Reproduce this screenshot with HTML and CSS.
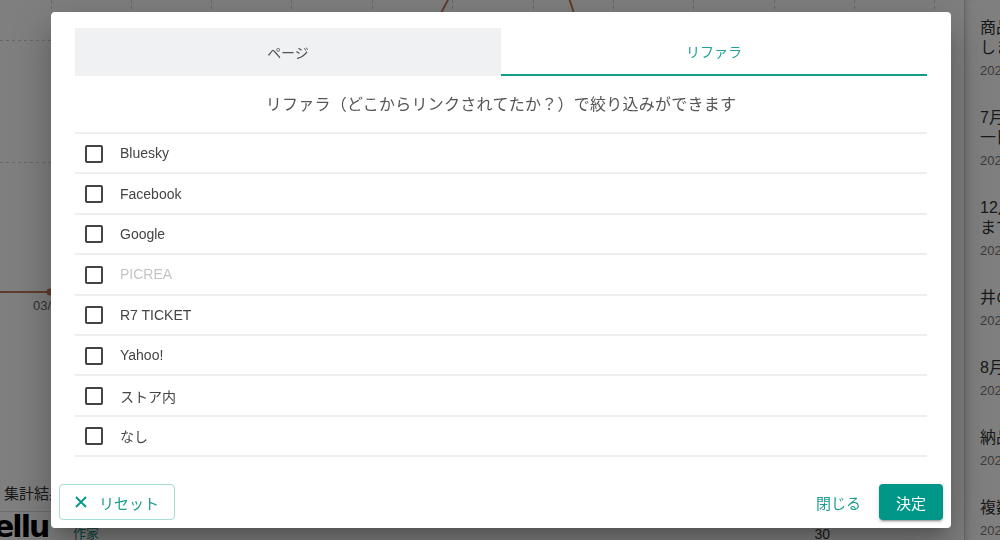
FILE: index.html
```html
<!DOCTYPE html>
<html lang="ja">
<head>
  <meta charset="UTF-8">
  <title>リファラ絞り込み</title>
  <link rel="stylesheet" href="styles.css">
</head>
<body>

  <div class="page">
    <div class="main">
      <svg class="chart" width="950" height="478" viewBox="0 0 950 478">
        <g stroke="#cfcfcf" stroke-dasharray="3 3" stroke-width="1">
          <line x1="51.5" y1="0" x2="51.5" y2="300"/>
          <line x1="131.5" y1="0" x2="131.5" y2="300"/>
          <line x1="211.5" y1="0" x2="211.5" y2="300"/>
          <line x1="291.5" y1="0" x2="291.5" y2="300"/>
          <line x1="372.5" y1="0" x2="372.5" y2="300"/>
          <line x1="452.5" y1="0" x2="452.5" y2="300"/>
          <line x1="533.5" y1="0" x2="533.5" y2="300"/>
          <line x1="613.5" y1="0" x2="613.5" y2="300"/>
          <line x1="693.5" y1="0" x2="693.5" y2="300"/>
          <line x1="774.5" y1="0" x2="774.5" y2="300"/>
          <line x1="854.5" y1="0" x2="854.5" y2="300"/>
          <line x1="934.5" y1="0" x2="934.5" y2="300"/>
          <line x1="0" y1="40.5" x2="950" y2="40.5"/>
          <line x1="0" y1="162.5" x2="950" y2="162.5"/>
        </g>
        <g stroke="#c0795a" stroke-width="2" fill="none">
          <path d="M449 -2 C 446 4 442 10 438 20"/>
          <path d="M569 -2 C 571 4 573 10 576 20"/>
          <line x1="0" y1="292" x2="50" y2="292"/>
        </g>
        <circle cx="50" cy="292" r="3.5" fill="#c0795a"/>
        <text x="33" y="310" class="axis">03/01</text>
      </svg>
      <h3 class="result-title">集計結果</h3>
      <div class="result-row">
        <span class="logo">ellu</span>
        <span class="result-name">作家</span>
        <span class="result-count">30</span>
      </div>
    </div>

    <aside class="side">
      <div class="news">
        <p class="news-title">商品が販売<br>しました</p>
        <p class="news-date">2024/08/01</p>
      </div>
      <div class="news">
        <p class="news-title">7月の売上<br>一日</p>
        <p class="news-date">2024/07/01</p>
      </div>
      <div class="news">
        <p class="news-title">12月の<br>まで</p>
        <p class="news-date">2023/12/01</p>
      </div>
      <div class="news">
        <p class="news-title">井の頭</p>
        <p class="news-date">2023/09/01</p>
      </div>
      <div class="news">
        <p class="news-title">8月の</p>
        <p class="news-date">2023/08/01</p>
      </div>
      <div class="news">
        <p class="news-title">納品</p>
        <p class="news-date">2023/07/01</p>
      </div>
      <div class="news">
        <p class="news-title">複数</p>
        <p class="news-date">2023/06/01</p>
      </div>
    </aside>
  </div>

  <div class="overlay">
    <div class="dialog">
      <div class="dialog-body">
        <div class="tabs">
          <div class="tab">ページ</div>
          <div class="tab tab-active">リファラ</div>
        </div>

        <p class="desc">リファラ（どこからリンクされてたか？）で絞り込みができます</p>

        <ul class="ref-list">
          <li class="ref-item"><span class="check"></span><span class="ref-label">Bluesky</span></li>
          <li class="ref-item"><span class="check"></span><span class="ref-label">Facebook</span></li>
          <li class="ref-item"><span class="check"></span><span class="ref-label">Google</span></li>
          <li class="ref-item disabled"><span class="check"></span><span class="ref-label">PICREA</span></li>
          <li class="ref-item"><span class="check"></span><span class="ref-label">R7 TICKET</span></li>
          <li class="ref-item"><span class="check"></span><span class="ref-label">Yahoo!</span></li>
          <li class="ref-item"><span class="check"></span><span class="ref-label">ストア内</span></li>
          <li class="ref-item"><span class="check"></span><span class="ref-label">なし</span></li>
        </ul>
      </div>

      <div class="actions">
        <button class="btn btn-outline">
          <svg class="btn-icon" width="12" height="12" viewBox="0 0 12 12"><path d="M1 1 L11 11 M11 1 L1 11" stroke="#009688" stroke-width="1.8"/></svg>
          <span>リセット</span>
        </button>
        <span class="spacer"></span>
        <button class="btn btn-text">閉じる</button>
        <button class="btn btn-primary">決定</button>
      </div>
    </div>
  </div>

</body>
</html>
```

FILE: styles.css
```css
* {
  box-sizing: border-box;
}

body {
  margin: 0;
  font-family: "Liberation Sans", "Noto Sans CJK JP", sans-serif;
  color: #333;
  background: #fff;
  overflow: hidden;
}

.page {
  display: flex;
  width: 1000px;
  height: 540px;
}

.main {
  width: 950px;
  flex: none;
}

.chart {
  display: block;
}

.axis {
  font-size: 13px;
  fill: #666;
}

.result-title {
  margin: 0;
  padding: 4px 4px 8px;
  font-size: 15px;
  font-weight: normal;
  color: #333;
  border-bottom: 1px solid #ddd;
}

.result-row {
  display: flex;
  align-items: flex-end;
  height: 30px;
}

.logo {
  width: 60px;
  font-size: 30px;
  font-weight: bold;
  font-family: "DejaVu Sans", sans-serif;
  color: #000;
  line-height: 30px;
  letter-spacing: -2px;
  margin-left: -6px;
}

.result-name {
  margin-left: 19px;
  font-size: 13px;
  color: #1a8a7e;
  line-height: 16px;
}

.result-count {
  margin-left: auto;
  margin-right: 120px;
  font-size: 14px;
  color: #333;
  line-height: 16px;
}

.side {
  flex: 1;
  border-left: 1px solid #ccc;
  margin-left: 14px;
  padding: 18px 0 0 15px;
  white-space: nowrap;
  overflow: hidden;
  box-shadow: inset 6px 0 8px -6px rgba(0, 0, 0, 0.2);
}

.news {
  margin-bottom: 28px;
}

.news p {
  margin: 0;
}

.news-title {
  font-size: 16px;
  line-height: 20px;
  color: #333;
}

.news-date {
  margin-top: 4px !important;
  font-size: 13px;
  line-height: 18px;
  color: #777;
}

/* ダイアログ */
.overlay {
  position: fixed;
  inset: 0;
  background: rgba(0, 0, 0, 0.5);
  display: flex;
  align-items: center;
  justify-content: center;
}

.dialog {
  width: 900px;
  height: 516px;
  margin-left: 2px;
  background: #fff;
  border-radius: 4px;
  box-shadow: 0 11px 15px -7px rgba(0, 0, 0, 0.2),
    0 24px 38px 3px rgba(0, 0, 0, 0.14),
    0 9px 46px 8px rgba(0, 0, 0, 0.12);
  display: flex;
  flex-direction: column;
}

.dialog-body {
  padding: 16px 24px 0;
  flex: 1;
}

.tabs {
  display: flex;
  height: 48px;
}

.tab {
  flex: 1;
  display: flex;
  align-items: center;
  justify-content: center;
  font-size: 14px;
  color: #555;
  background: #f0f1f3;
}

.tab-active {
  background: #fff;
  color: #1fa293;
  border-bottom: 2px solid #139b8c;
}

.desc {
  margin: 0;
  height: 56px;
  padding-top: 1px;
  line-height: 56px;
  text-align: center;
  font-size: 16px;
  letter-spacing: 0.25px;
  color: #555;
}

.ref-list {
  list-style: none;
  margin: 0;
  padding: 0;
  border-top: 2px solid #eee;
}

.ref-item {
  display: flex;
  align-items: center;
  height: 40.4px;
  padding-left: 10px;
  border-bottom: 2px solid #eee;
}

.check {
  width: 18px;
  height: 18px;
  border: 2px solid #444;
  border-radius: 2px;
  margin-top: 1px;
}

.ref-label {
  margin-left: 17px;
  font-size: 14px;
  color: #444;
}

.disabled .ref-label {
  color: #c4c4c4;
}

.actions {
  display: flex;
  align-items: center;
  padding: 8px;
}

.spacer {
  flex: 1;
}

.btn {
  height: 36px;
  border-radius: 4px;
  font-family: "Liberation Sans", "Noto Sans CJK JP", sans-serif;
  font-size: 15px;
  letter-spacing: 0;
  white-space: nowrap;
  cursor: pointer;
  display: flex;
  align-items: center;
}

.btn-icon {
  flex: none;
  width: 12px;
  height: 12px;
}

.btn-outline {
  padding: 0 15px 0 15px;
  gap: 12px;
  background: #fff;
  border: 1px solid #a9dbd6;
  color: #1a9c8e;
}

.btn-text {
  padding: 0 16px;
  background: none;
  border: none;
  color: #1a9c8e;
}

.btn-primary {
  width: 64px;
  justify-content: center;
  margin-left: 2px;
  background: #009688;
  border: none;
  color: #fff;
  box-shadow: 0 3px 1px -2px rgba(0, 0, 0, 0.2),
    0 2px 2px 0 rgba(0, 0, 0, 0.14),
    0 1px 5px 0 rgba(0, 0, 0, 0.12);
}
```
